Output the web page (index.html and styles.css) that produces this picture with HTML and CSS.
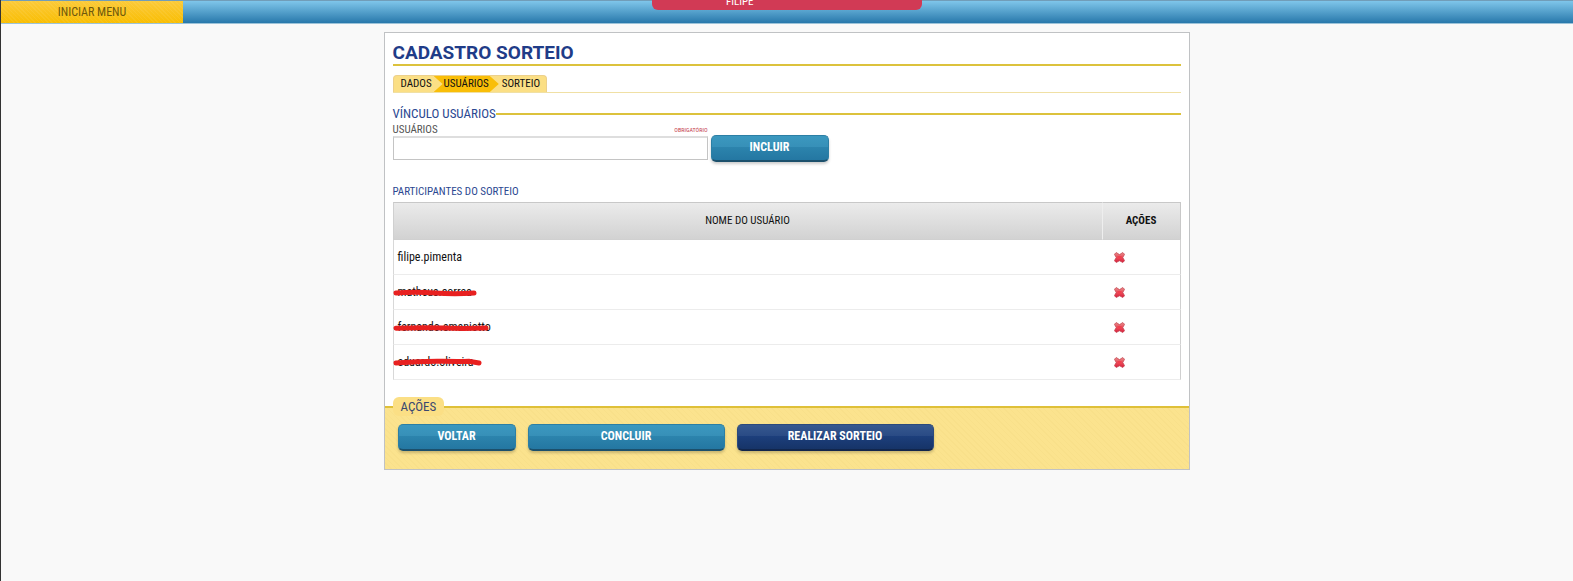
FILE: index.html
```html
<!DOCTYPE html>
<html lang="pt-BR">
<head>
<meta charset="utf-8">
<title>Cadastro Sorteio</title>
<link rel="stylesheet" href="styles.css">
</head>
<body>
<svg class="defs" aria-hidden="true">
  <defs>
    <linearGradient id="red" x1="0" y1="0" x2="0" y2="1"><stop offset="0" stop-color="#e78a8a"/><stop offset=".5" stop-color="#e8505c"/><stop offset="1" stop-color="#d81e3c"/></linearGradient>
    <symbol id="remove" viewBox="0 0 11 11"><path d="M2.200.5 5.500 2.600 8.800.5l1.800 1.800L8.800 5.500l1.800 3.200-1.800 1.800-3.300-1.700-3.300 1.700L.4 8.700l1.800-3.200L.4 2.300z" fill="url(#red)" stroke="#c0404c" stroke-width=".7" stroke-linejoin="round"/><path d="M3.400 4h4.200v3H3.400z" fill="#f0404f"/></symbol>
  </defs>
</svg>
<header class="topbar">
  <button class="menu" type="button">INICIAR MENU</button>
  <div class="user">FILIPE</div>
</header>
<main class="panel">
  <div class="content">
    <h1 class="title">CADASTRO SORTEIO</h1>
    <nav class="steps">
      <div class="steps-list">
        <a class="step" href="#dados">DADOS</a>
        <a class="step active" href="#usuarios">USUÁRIOS</a>
        <a class="step" href="#sorteio">SORTEIO</a>
      </div>
    </nav>
    <h2 class="section-title">VÍNCULO USUÁRIOS</h2>
    <form class="add-form">
      <div class="field">
        <div class="field-head">
          <label for="usuario">USUÁRIOS</label>
          <span class="required">OBRIGATÓRIO</span>
        </div>
        <input id="usuario" type="text">
      </div>
      <button class="btn" type="button">INCLUIR</button>
    </form>
    <table class="users">
      <caption>PARTICIPANTES DO SORTEIO</caption>
      <thead>
        <tr><th class="name-col">NOME DO USUÁRIO</th><th class="action-col">AÇÕES</th></tr>
      </thead>
      <tbody>
        <tr><td>filipe.pimenta</td><td class="action"><button class="remove" type="button" aria-label="Remover filipe.pimenta"><svg><use href="#remove"/></svg></button></td></tr>
        <tr><td><span class="name">matheus.correa<svg class="mark" viewBox="0 0 96 12"><path d="M3 7Q22 5.500 42 7T81 7"/></svg></span></td><td class="action"><button class="remove" type="button" aria-label="Remover matheus.correa"><svg><use href="#remove"/></svg></button></td></tr>
        <tr><td><span class="name">fernando.smaniotto<svg class="mark" viewBox="0 0 96 12"><path d="M3 7.200Q30 6.200 50 7T93 7"/></svg></span></td><td class="action"><button class="remove" type="button" aria-label="Remover fernando.smaniotto"><svg><use href="#remove"/></svg></button></td></tr>
        <tr><td><span class="name">eduardo.oliveira<svg class="mark" viewBox="0 0 96 12"><path d="M3 7Q28 5 50 5.300T76 5.300L86 7"/></svg></span></td><td class="action"><button class="remove" type="button" aria-label="Remover eduardo.oliveira"><svg><use href="#remove"/></svg></button></td></tr>
      </tbody>
    </table>
  </div>
  <section class="actions">
    <h2 class="actions-title">AÇÕES</h2>
    <button class="btn" type="button">VOLTAR</button>
    <button class="btn wide" type="button">CONCLUIR</button>
    <button class="btn wide dark" type="button">REALIZAR SORTEIO</button>
  </section>
</main>
</body>
</html>
```
FILE: styles.css
```css
* { box-sizing: border-box; }
html { min-height: 100%; background: linear-gradient(90deg, #333 1px, #f9f9f9 1px); }
body { margin: 0; font: 11px/14px "Roboto Condensed", Roboto, "Open Sans", sans-serif; color: #111; }
h1, h2 { margin: 0; }
button { font-family: inherit; cursor: pointer; }
.defs { position: absolute; width: 0; height: 0; }

.topbar {
  position: relative;
  display: flex;
  height: 24px;
  margin-left: 1px;
  border-top: 1px solid #719db8;
  border-bottom: 1px solid #9cc3d9;
  background: linear-gradient(#7fc6ea, #2878ab);
}
.menu {
  width: 182px;
  padding: 0;
  border: 0;
  background: repeating-linear-gradient(45deg, #ffffff10 0 1px, transparent 1px 3px), linear-gradient(#fbca3a, #f9be04);
  color: #6e590c;
  font-size: 12px;
  font-weight: 400;
}
.user {
  position: absolute;
  top: -8px;
  left: 50%;
  width: 270px;
  height: 17px;
  margin-left: -135px;
  padding-left: 74px;
  border-radius: 0 0 6px 6px;
  background: #d13a55;
  color: #fff;
  font-weight: 400;
  line-height: 18px;
}

.panel {
  max-width: 806px;
  margin: 8px auto 0;
  border: 1px solid #c0c2c4;
  background: #fff;
}
.content { padding: 9px 8px 0; }
.title {
  border-bottom: 2px solid #dcc23c;
  color: #1f3c88;
  font-family: Roboto, "Open Sans", sans-serif;
  font-size: 19px;
  line-height: 22px;
}
.steps { margin-top: 9px; border-bottom: 1px solid #f0e0a4; }
.steps-list {
  display: inline-flex;
  border: 1px solid #ecd08c;
  border-bottom: 0;
  border-radius: 4px 4px 0 0;
  overflow: hidden;
  background: #fbdf85;
  vertical-align: top;
}
.step { padding: 0 6px 0 3px; color: #111; line-height: 16px; text-decoration: none; }
.step:first-child { padding: 0 2px 0 7px; }
.step.active {
  padding: 0 10px;
  background: #f9be08;
  clip-path: polygon(0 0, calc(100% - 9px) 0, 100% 50%, calc(100% - 9px) 100%, 0 100%, 9px 50%);
}
.section-title {
  display: flex;
  align-items: center;
  margin-top: 12px;
  color: #2b4891;
  font-size: 13px;
  font-weight: 400;
  line-height: 18px;
}
.section-title::after { content: ""; flex: 1; height: 2px; background: #dcc23c; }

.add-form { display: flex; gap: 3px; align-items: flex-start; margin-top: 1px; }
.field { flex: 0 1 315px; }
.field-head { display: flex; justify-content: space-between; line-height: 12px; color: #555; }
.required { color: #c43a4c; font-size: 6px; }
.field input {
  display: block;
  width: 100%;
  height: 24px;
  border: 1px solid #c4c4c4;
  border-top: 2px solid #dedede;
  background: #fff;
}
.btn {
  width: 118px;
  height: 27px;
  padding: 0 0 3px;
  border: 1px solid #2c7fa5;
  border-bottom: 2px solid #1c506c;
  border-radius: 5px;
  background: linear-gradient(#3b98bf 0%, #3790b8 45%, #2c84ad 46%, #2477a2 100%);
  box-shadow: 0 2px 3px #0003;
  color: #fff;
  font-size: 12px;
  font-weight: 700;
}
.add-form .btn { margin-top: 11px; }
.btn.wide { width: 197px; }
.btn.dark {
  border-color: #2c4a7c;
  border-bottom-color: #12264c;
  background: linear-gradient(#36588f 0%, #2a4b85 45%, #1d3f7c 46%, #163468 100%);
}

.users {
  width: 100%;
  margin-top: 23px;
  border-collapse: separate;
  border-spacing: 0;
  table-layout: fixed;
}
.users caption { padding-bottom: 3px; color: #2b4891; text-align: left; }
.users th {
  height: 38px;
  padding: 0;
  border-top: 1px solid #c8c8c8;
  border-bottom: 1px solid #d0d0d0;
  background: linear-gradient(#ebebeb, #d2d2d2);
}
.users .name-col { border-left: 1px solid #d0d0d0; font-weight: 400; }
.users .action-col { width: 79px; border-left: 1px solid #eee; border-right: 1px solid #c8c8c8; }
.users td { height: 35px; padding: 0 4px; border-bottom: 1px solid #ececec; border-left: 1px solid #d8d8d8; font-size: 12px; }
.users .action { padding: 0 0 0 12px; border-right: 1px solid #d0d0d0; border-left: 0; }
.remove { display: block; width: 11px; height: 11px; padding: 0; border: 0; background: none; }
.remove svg { display: block; width: 11px; height: 11px; }
.name { position: relative; }
.mark {
  position: absolute;
  top: 1px;
  left: -5px;
  width: 96px;
  height: 12px;
  fill: none;
  stroke: #e82020;
  stroke-width: 5;
  stroke-linecap: round;
}

.actions {
  position: relative;
  display: flex;
  flex-wrap: wrap;
  gap: 12px;
  margin-top: 26px;
  padding: 16px 13px 18px;
  border-top: 2px solid #dfc038;
  background: repeating-linear-gradient(45deg, #e8cc7022 0 1px, transparent 1px 4px), #fbe38e;
}
.actions-title {
  position: absolute;
  top: -11px;
  left: 8px;
  padding: 0 8px;
  border-radius: 6px;
  background: #fbdf85;
  color: #3a4870;
  font-size: 13px;
  font-weight: 400;
  line-height: 19px;
}
```
